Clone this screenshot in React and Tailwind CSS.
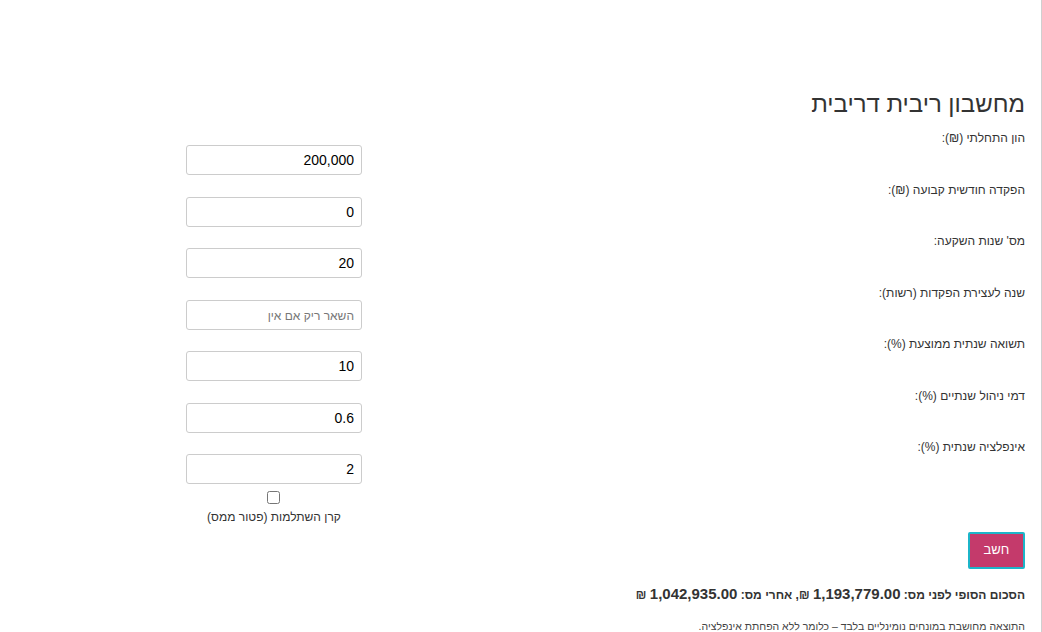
import { useState } from 'react';

const fields = [
  { label: 'הון התחלתי (₪):', value: '200,000' },
  { label: 'הפקדה חודשית קבועה (₪):', value: '0' },
  { label: "מס' שנות השקעה:", value: '20' },
  { label: 'שנה לעצירת הפקדות (רשות):', value: '', placeholder: 'השאר ריק אם אין' },
  { label: 'תשואה שנתית ממוצעת (%):', value: '10' },
  { label: 'דמי ניהול שנתיים (%):', value: '0.6' },
  { label: 'אינפלציה שנתית (%):', value: '2' },
];

const App = () => {
  const [values, setValues] = useState(fields.map((f) => f.value));
  const [exempt, setExempt] = useState(false);

  return (
    <div className="h-[632px] w-full overflow-hidden bg-white border-r border-[#cfcfcf] font-['Liberation_Sans',Arial,sans-serif] text-[#333]">
      <div dir="rtl" className="pr-[16px] pt-[86px]">
        {/* Title */}
        <h1 className="text-[24px] leading-[36px] text-[#333]">מחשבון ריבית דריבית</h1>

        {/* Fields */}
        <div className="pl-[186px] mt-[8px]">
          {fields.map((f, i) => (
            <div key={i} className="flex justify-between items-start h-[51.5px]">
              <label className="text-[12px] leading-[16px]">{f.label}</label>
              <input
                type="text"
                dir="rtl"
                value={values[i]}
                placeholder={f.placeholder}
                onChange={(e) => {
                  const next = [...values];
                  next[i] = e.target.value;
                  setValues(next);
                }}
                className="mt-[15px] w-[176px] h-[30px] border border-[#cccccc] rounded-[3px] px-[7px] text-[14px] text-black placeholder:text-[#777] placeholder:text-[12px] outline-none"
              />
            </div>
          ))}

          {/* Checkbox */}
          <div className="flex justify-end">
            <div className="w-[176px] flex flex-col items-center">
              <input
                type="checkbox"
                checked={exempt}
                onChange={(e) => setExempt(e.target.checked)}
                className="w-[13px] h-[13px] m-0 -translate-x-[1px]"
              />
              <span className="text-[12px] leading-[16px] mt-[5px]">קרן השתלמות (פטור ממס)</span>
            </div>
          </div>
        </div>

        {/* Button */}
        <button className="mt-[7px] w-[57px] h-[37px] bg-[#c43a6b] border-2 border-[#1cb5c9] text-white text-[13px] rounded-[2px]">
          חשב
        </button>

        {/* Result */}
        <p className="mt-[16px] text-[12px] font-bold leading-[18px]">
          הסכום הסופי לפני מס: <span className="text-[15px]">1,193,779.00</span> ₪, אחרי מס: <span className="text-[15px]">1,042,935.00</span> ₪
        </p>

        <p className="mt-[15px] text-[10.5px] leading-[14px] text-[#444]">
          התוצאה מחושבת במונחים נומינליים בלבד – כלומר ללא הפחתת אינפלציה.
        </p>
      </div>
    </div>
  );
};

export default App;
